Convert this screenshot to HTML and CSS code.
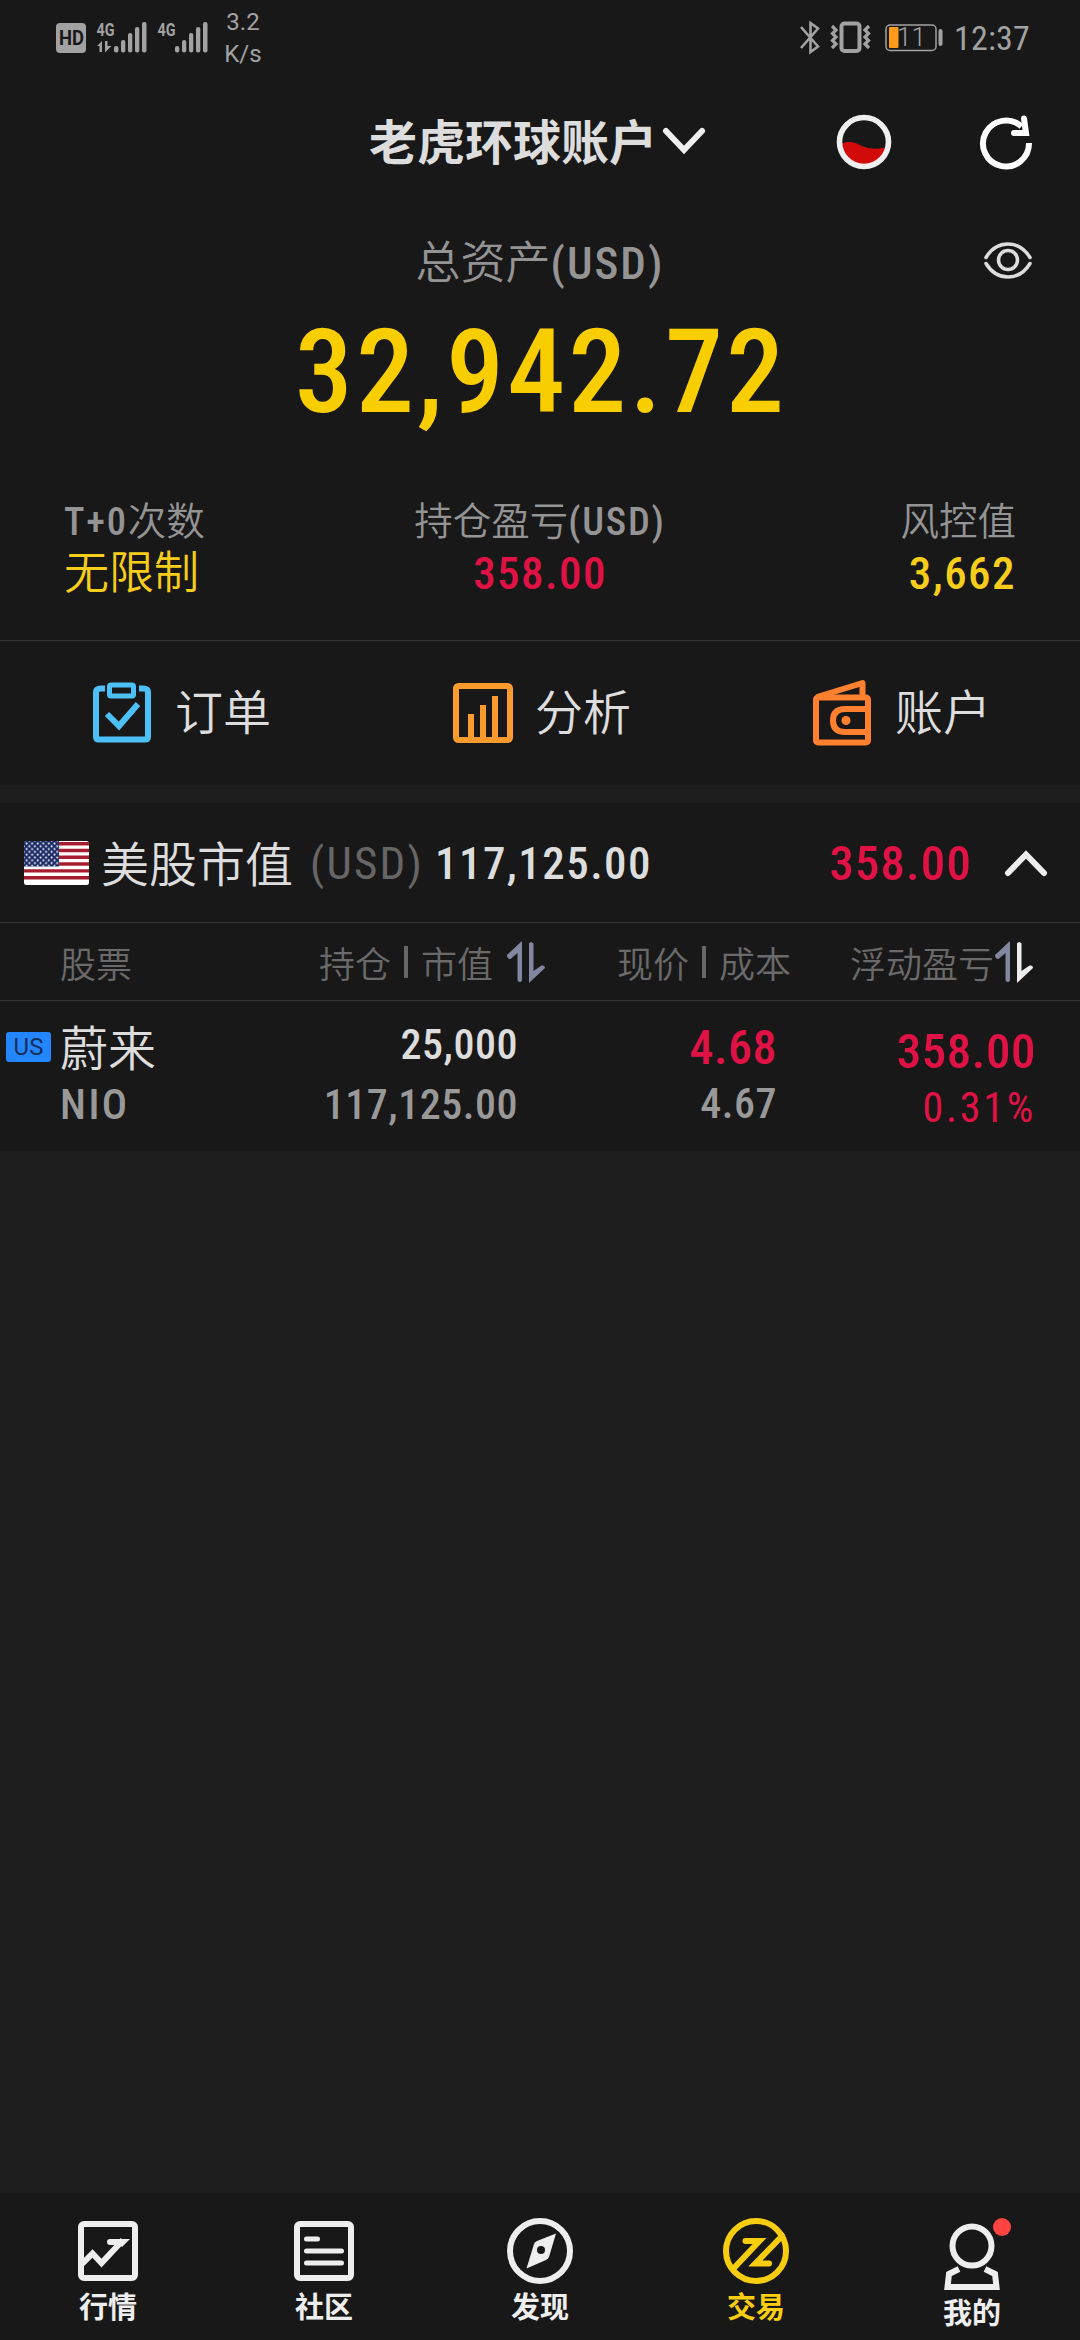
FILE: index.html
```html
<!DOCTYPE html>
<html lang="zh-CN">
<head>
  <meta charset="UTF-8" />
  <meta name="viewport" content="width=device-width, initial-scale=1.0"/>
  <title>老虎环球账户</title>
  <link rel="stylesheet" href="styles.css">
</head>
<body>
  <!-- status bar -->
  <header class="status">
    <svg class="status-left" width="160" height="76" viewBox="52 0 160 76">
      <rect x="56" y="23" width="30" height="30" rx="4" fill="#a2a2a2"/>
      <text x="59" y="45" font-size="20" font-weight="700" fill="#181818" textLength="25" lengthAdjust="spacingAndGlyphs">HD</text>
      <g fill="#a2a2a2">
        <text x="96.500" y="36" font-size="19" font-weight="700" textLength="18" lengthAdjust="spacingAndGlyphs">4G</text>
        <path d="M97 46l5-5v11h-2.500v-6zM105 41h2.500v5l4 0-6.500 6.500z"/>
        <rect x="114" y="46" width="4.500" height="6.500" rx="2"/>
        <rect x="121" y="40" width="4.300" height="12.500" rx="2"/>
        <rect x="128" y="33" width="4.300" height="19.500" rx="2"/>
        <rect x="135" y="27" width="4.300" height="25.500" rx="2"/>
        <rect x="142" y="22" width="4.500" height="30.500" rx="2"/>
        <text x="157.500" y="36" font-size="19" font-weight="700" textLength="18" lengthAdjust="spacingAndGlyphs">4G</text>
        <rect x="175" y="46" width="4.300" height="6.500" rx="2"/>
        <rect x="182" y="40" width="4.300" height="12.500" rx="2"/>
        <rect x="189" y="33" width="4.300" height="19.500" rx="2"/>
        <rect x="196" y="27" width="4.300" height="25.500" rx="2"/>
        <rect x="203" y="22" width="4.500" height="30.500" rx="2"/>
      </g>
    </svg>
    <div class="speed">3.2<br>K/s</div>
    <svg class="status-right" width="150" height="76" viewBox="795 0 150 76">
      <g fill="none" stroke="#a2a2a2">
        <path d="M801 27l17 19.500-7.500 5.500v-29l7.500 5.500-17 19.500" stroke-width="2.600"/>
        <rect x="841.500" y="23.500" width="18" height="27.500" rx="3" stroke-width="4"/>
        <path d="M832 26l4 4-3.500 3.500 3.500 3.500-3.500 3.500 3.500 3.500-4 4M869 26l-4 4 3.500 3.500-3.500 3.500 3.500 3.500-3.500 3.500 4 4" stroke-width="3.200"/>
        <rect x="886" y="25" width="50" height="25.500" rx="4" stroke-width="1.500"/>
      </g>
      <rect x="889" y="27" width="9.500" height="21" rx="1" fill="#ff9b1c"/>
      <rect x="938.500" y="29" width="4" height="17" rx="2" fill="#a2a2a2"/>
      <text x="897" y="46" font-size="26" font-weight="300" fill="#a2a2a2">11</text>
    </svg>
    <div class="clock">12:37</div>
  </header>

  <!-- account title -->
  <nav class="topbar">
    <div class="account"><span>老虎环球账户</span>
      <svg width="44" height="28" viewBox="0 0 44 28"><path d="M4 4l18 19L40 4" fill="none" stroke="#eee" stroke-width="6" stroke-linecap="round"/></svg>
    </div>
    <svg class="ball" width="56" height="56" viewBox="0 0 56 56">
      <circle cx="28" cy="28" r="24" fill="#181818"/>
      <path d="M5 30c8-4 15-1 21 2 7 3 15 4 25 1a23 23 0 0 1-46-3z" fill="#d20a0a"/>
      <circle cx="28" cy="28" r="24.500" fill="none" stroke="#efefef" stroke-width="5.600"/>
    </svg>
    <svg class="refresh" width="56" height="56" viewBox="0 0 56 56">
      <path d="M51 29a23 23 0 1 1-7.500-16.500" fill="none" stroke="#fff" stroke-width="6"/>
      <path d="M46 4.500l2 14.500H36" fill="none" stroke="#fff" stroke-width="6" stroke-linecap="round"/>
    </svg>
  </nav>

  <section class="asset">
    <div class="asset-label">总资产<span class="num">(USD)</span></div>
    <svg class="eye" width="50" height="38" viewBox="0 0 50 38" fill="none" stroke="#ddd" stroke-width="3.500" stroke-linecap="round">
      <path d="M3 16.500C14-1.500 36-1.500 47 16.500M3 22.500c11 18 33 18 44 0"/>
      <circle cx="25" cy="19" r="9.500"/>
    </svg>
    <div class="asset-total num">32,942.72</div>
  </section>

  <section class="stats">
    <div class="stat">
      <div class="stat-label"><span class="num">T+0</span>次数</div>
      <div class="stat-value yellow">无限制</div>
    </div>
    <div class="stat center">
      <div class="stat-label">持仓盈亏<span class="num">(USD)</span></div>
      <div class="stat-value red num">358.00</div>
    </div>
    <div class="stat right">
      <div class="stat-label">风控值</div>
      <div class="stat-value yellow num">3,662</div>
    </div>
  </section>

  <section class="actions">
    <a class="action">
      <svg width="60" height="68" viewBox="0 0 60 68" fill="none" stroke="#4ec0f8">
        <path d="M12 9.500H8Q3 9.500 3 13v45q0 2.500 3 2.500h46q3 0 3-2.500V13q0-3.500-5-3.500h-4" stroke-width="6"/>
        <rect x="16.500" y="6" width="24" height="11" rx="1.500" stroke-width="5"/>
        <path d="M14 35l12 12L45 25" stroke-width="6"/>
      </svg>
      <span>订单</span>
    </a>
    <a class="action">
      <svg width="60" height="68" viewBox="0 0 60 68" fill="none" stroke="#fb9b2d" stroke-width="6">
        <rect x="3" y="7" width="54" height="54" rx="2.500"/>
        <path d="M18 60V35M30 60V26M42 60V17"/>
      </svg>
      <span>分析</span>
    </a>
    <a class="action">
      <svg width="60" height="68" viewBox="0 0 60 68" fill="none" stroke="#ff802f" stroke-width="6" stroke-linejoin="round">
        <rect x="3" y="18.500" width="52" height="45" rx="2"/>
        <path d="M4 18L49.500 4v14M54 30H32q-12 0-12 11.500T32 53h22"/>
        <circle cx="33" cy="41.500" r="4.500" fill="#ff802f" stroke="none"/>
      </svg>
      <span>账户</span>
    </a>
  </section>

  <section class="holdings">
    <div class="market">
      <svg class="flag" width="65" height="44" viewBox="0 0 63 44" preserveAspectRatio="none">
        <defs>
          <clipPath id="flagClip"><rect width="63" height="44" rx="2.500"/></clipPath>
          <pattern id="stars" x="1" y="1" width="5.400" height="5.600" patternUnits="userSpaceOnUse">
            <circle cx="1.500" cy="1.500" r="1" fill="#fff"/>
            <circle cx="4.200" cy="4.300" r="1" fill="#fff"/>
          </pattern>
        </defs>
        <g clip-path="url(#flagClip)">
          <rect width="63" height="44" fill="#fff"/>
          <path d="M0 1.700h63M0 8.500h63M0 15.300h63M0 22h63M0 28.900h63M0 35.700h63" transform="translate(0 1)" stroke="#a61c30" stroke-width="3.400"/>
          <rect width="34" height="25.500" fill="#1b2c66"/>
          <rect width="34" height="25.500" fill="url(#stars)"/>
        </g>
      </svg>
      <span class="market-name">美股市值</span>
      <span class="market-unit num">(USD)</span>
      <span class="market-total num">117,125.00</span>
      <span class="market-pl red num">358.00</span>
      <svg width="44" height="28" viewBox="0 0 44 28"><path d="M4 23L22 4.500 40 23" fill="none" stroke="#eee" stroke-width="6" stroke-linecap="round"/></svg>
    </div>

    <div class="row thead">
      <div class="c1">股票</div>
      <div class="c2">持仓<i></i>市值
        <svg width="38" height="42" viewBox="0 0 38 42"><path d="M0 14L15 0v39.500q-2 3-4.500 0V12L3.500 18Q0 18 0 14z" fill="#83869f"/><path d="M38 27L22 42V2.500q2-3 4.500 0V30l8-5.500Q38 24 38 27z" fill="#83869f"/></svg>
      </div>
      <div class="c3">现价<i></i>成本</div>
      <div class="c4">浮动盈亏<svg width="38" height="42" viewBox="0 0 38 42"><path d="M0 14L15 0v39.500q-2 3-4.500 0V12L3.500 18Q0 18 0 14z" fill="#83869f"/><path d="M38 27L22 42V2.500q2-3 4.500 0V30l8-5.500Q38 24 38 27z" fill="#eee"/></svg>
      </div>
    </div>

    <div class="row stock">
      <div class="c1">
        <b class="badge">US</b>
        <div class="name">蔚来</div>
        <div class="sub num">NIO</div>
      </div>
      <div class="c2 num">
        <div class="qty">25,000</div>
        <div class="sub">117,125.00</div>
      </div>
      <div class="c3 num">
        <div class="price red">4.68</div>
        <div class="sub">4.67</div>
      </div>
      <div class="c4 num red">
        <div class="price">358.00</div>
        <div class="sub pct">0.31%</div>
      </div>
    </div>
  </section>

  <footer class="tabs">
    <a class="tab">
      <svg width="66" height="66" viewBox="0 0 66 66" fill="none" stroke="#eee" stroke-width="6">
        <rect x="6" y="6" width="54" height="54" rx="3"/>
        <path d="M6 47l11.500-11.500L26.500 45 48 22"/>
        <path d="M35 24h10" stroke-linecap="round"/>
        <path d="M40 21h15l-8 8z" fill="#eee" stroke="none"/>
      </svg>
      行情
    </a>
    <a class="tab">
      <svg width="66" height="66" viewBox="0 0 66 66" fill="none" stroke="#eee" stroke-width="6">
        <rect x="6" y="6" width="54" height="54" rx="3"/>
        <path d="M15.500 21h11M15.500 33h35M15.500 45h35" stroke-width="5" stroke-linecap="round"/>
      </svg>
      社区
    </a>
    <a class="tab">
      <svg width="66" height="66" viewBox="0 0 66 66" fill="none" stroke="#eee">
        <circle cx="33" cy="33" r="30" stroke-width="6"/>
        <path d="M19.500 50.500L27 26q1-2 3-3L49 15.500 42 39q-1 2-3 3z" fill="#eee" stroke="none"/>
        <circle cx="34" cy="32" r="4" fill="#181818" stroke="none"/>
      </svg>
      发现
    </a>
    <a class="tab active">
      <svg width="66" height="66" viewBox="0 0 66 66" fill="none" stroke="#f7cd10" stroke-width="6">
        <circle cx="33" cy="33" r="30"/>
        <path d="M10 51L36.500 23H22.500" stroke-linecap="round"/>
        <path d="M59 18L32.500 45.500H46" stroke-linecap="round"/>
        <path d="M34 20h8l-6 7zM35 48h-9l7-7z" fill="#f7cd10" stroke="none"/>
      </svg>
      交易
    </a>
    <a class="tab mine">
      <svg width="66" height="72" viewBox="0 0 66 72" fill="none" stroke="#eee" stroke-width="6">
        <circle cx="33" cy="28" r="19.500"/>
        <path d="M20 51l-10 5-1.500 13h49L56 56l-10-5"/>
      </svg>
      我的
      <span class="dot"></span>
    </a>
  </footer>
</body>
</html>
```
FILE: styles.css
```css
* {
  margin: 0;
  padding: 0;
  box-sizing: border-box;
}
body {
  width: 1080px;
  height: 2340px;
  display: flex;
  flex-direction: column;
  background: #1e1e1e;
  color: #ddd;
  font-family: Roboto, "Noto Sans CJK SC", sans-serif;
  font-weight: 350;
  overflow: hidden;
}
svg {
  display: block;
  flex: none;
}
.num {
  font-family: Roboto, sans-serif;
  font-weight: 500;
  font-stretch: 75%;
  letter-spacing: 0.032em;
}
.red {
  color: #e01245;
}
.yellow {
  color: #f7cd1b;
}

/* status bar */
.status {
  height: 76px;
  padding: 0 45px 0 52px;
  display: flex;
  background: #181818;
  color: #a2a2a2;
}
.speed {
  width: 62px;
  margin-top: 6px;
  font-size: 24px;
  line-height: 32px;
  font-weight: 400;
  text-align: center;
}
.status-right {
  margin-left: auto;
}
.clock {
  width: 90px;
  padding-left: 9px;
  font-size: 34px;
  font-weight: 400;
  font-stretch: 75%;
  letter-spacing: 0.2px;
  line-height: 76px;
}

/* title */
.topbar {
  height: 132px;
  padding: 0 46px 0 369px;
  display: flex;
  align-items: center;
  background: #181818;
}
.account {
  display: flex;
  align-items: center;
  gap: 5px;
  font-size: 48px;
  font-weight: 700;
}
.account span {
  margin-top: -6px;
}
.account svg {
  margin-top: -3px;
}
.ball {
  margin-left: auto;
}
.refresh {
  margin-left: 86px;
}

.asset {
  position: relative;
  height: 280px;
  padding-top: 23px;
  text-align: center;
  background: #181818;
}
.asset-label {
  font-size: 45px;
  line-height: 66px;
  color: #949494;
}
.asset-label .num {
  letter-spacing: 0.045em;
}
.eye {
  position: absolute;
  top: 33px;
  right: 47px;
}
.asset-total {
  margin-top: 8px;
  padding-left: 2px;
  font-size: 116px;
  line-height: 134px;
  letter-spacing: 0.027em;
  color: #f9ce00;
}

.stats {
  height: 152px;
  padding: 6px 64px 0;
  display: flex;
  background: #181818;
}
.stat {
  flex: 1;
}
.center {
  text-align: center;
}
.right {
  text-align: right;
}
.stat-label {
  font-size: 38.500px;
  line-height: 56px;
  color: #949494;
}
.stat-label .num {
  letter-spacing: 0.045em;
}
.stat-value {
  font-size: 45px;
  line-height: 48px;
}

.actions {
  height: 145px;
  display: flex;
  background: #181818;
  border-top: 1px solid #333;
}
.action {
  flex: 1;
  padding-left: 93px;
  display: flex;
  align-items: center;
  gap: 22px;
  font-size: 48px;
}
.action span {
  margin-top: -9px;
}

/* holdings */
.holdings {
  margin-top: 18px;
  height: 348px;
  background: #181818;
}
.market {
  height: 119px;
  padding: 2px 32px 0 24px;
  display: flex;
  align-items: center;
  font-size: 45px;
}
.flag {
  margin-top: -2px;
}
.market-name {
  margin: -6px 0 0 12px;
  font-size: 48px;
}
.market-unit {
  margin-left: 17px;
  color: #666;
  font-weight: 400;
  letter-spacing: 0.05em;
}
.market-total {
  margin-left: 11px;
}
.market-pl {
  margin-left: auto;
  margin-right: 32px;
  font-size: 49px;
  letter-spacing: 0.022em;
}
.row {
  display: grid;
  grid-template-columns: 280px 270px 260px 270px;
  border-top: 1px solid #363636;
}
.thead {
  height: 78px;
  align-items: center;
  font-size: 36px;
  color: #6a6a6a;
}
.thead div {
  display: flex;
  align-items: center;
}
.thead i {
  width: 4px;
  height: 32px;
  margin: 0 13px;
  background: #666;
}
.thead .c1 {
  padding-left: 60px;
}
.thead .c2 {
  padding-left: 39px;
}
.thead .c2 svg {
  margin-left: 14px;
}
.thead .c3 {
  padding-left: 67px;
}
.thead .c4 {
  padding-left: 40px;
}
.thead .c4 svg {
  margin-left: 1px;
}

.stock {
  position: relative;
  height: 151px;
  padding-top: 19px;
}
.stock .c1 {
  padding-left: 60px;
}
.stock .c2 {
  padding-right: 32px;
  text-align: right;
}
.stock .c3 {
  padding-right: 33px;
  text-align: right;
}
.stock .c4 {
  padding-right: 44px;
  text-align: right;
}
.badge {
  position: absolute;
  left: 6px;
  top: 31px;
  width: 45px;
  height: 30px;
  border-radius: 3px;
  background: #2486ff;
  color: #152e58;
  font-size: 24px;
  font-weight: 400;
  line-height: 30px;
  text-align: center;
}
.name {
  padding-top: 2px;
  font-size: 48px;
  line-height: 56px;
}
.sub {
  font-size: 42px;
  line-height: 60px;
  color: #999;
}
.name + .sub {
  margin-top: -3px;
  letter-spacing: 0.06em;
}
.qty {
  font-size: 42px;
  line-height: 50px;
}
.qty + .sub {
  margin-top: 5px;
}
.price {
  font-size: 48px;
  line-height: 56px;
}
.price + .sub {
  margin-top: -2px;
}
.c4 .price {
  padding-top: 4px;
  font-size: 49px;
}
.pct {
  font-weight: 400;
  letter-spacing: 0.065em;
  color: #e01245;
}

/* bottom tabs */
.tabs {
  height: 147px;
  margin-top: auto;
  display: flex;
  background: #181818;
}
.tab {
  position: relative;
  flex: 1;
  padding-top: 25px;
  display: flex;
  flex-direction: column;
  align-items: center;
  color: #eee;
  font-size: 29px;
  line-height: 48px;
  font-weight: 700;
}
.active {
  color: #f7cd10;
}
.dot {
  position: absolute;
  left: 129px;
  top: 25px;
  width: 18px;
  height: 18px;
  border-radius: 50%;
  background: #ff4343;
}
```
